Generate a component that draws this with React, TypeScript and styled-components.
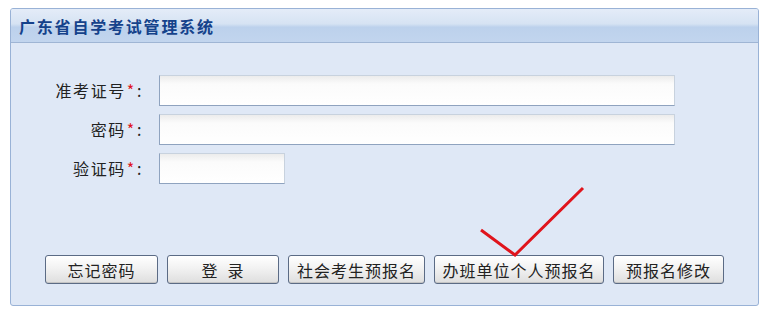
import React from "react";
import styled, { createGlobalStyle } from "styled-components";

const GlobalStyle = createGlobalStyle`
  html, body {
    margin: 0;
    padding: 0;
    background: #ffffff;
  }
  body {
    font-family: "Noto Sans CJK SC", "Liberation Sans", sans-serif;
  }
`;

const Page = styled.div`
  padding: 8px 0 0 10px;
`;

const Panel = styled.div`
  position: relative;
  width: 747px;
  height: 296px;
  border: 1px solid #99b2d6;
  border-radius: 3px;
  background: #dfe8f6;
  display: flex;
  flex-direction: column;
  overflow: hidden;
`;

const Header = styled.div`
  height: 33px;
  border-bottom: 1px solid #9fb5d4;
  background: linear-gradient(#e4ecf8 0%, #d6e3f3 45%, #bcd1ec 55%, #c2d5ee 100%);
  display: flex;
  align-items: center;
  padding-left: 8px;
`;

const Title = styled.h1`
  margin: 0;
  font-size: 16px;
  font-weight: bold;
  letter-spacing: 1.8px;
  color: #15428b;
`;

const Body = styled.div`
  flex: 1;
  display: flex;
  flex-direction: column;
  padding-top: 32px;
`;

const Fields = styled.div`
  display: grid;
  grid-template-columns: 132px 1fr;
  column-gap: 16px;
  row-gap: 8px;
  align-items: center;
`;

const Label = styled.label`
  text-align: right;
  font-size: 16px;
  letter-spacing: 1.6px;
  color: #222;
  line-height: 31px;
`;

const Star = styled.span`
  color: #e0141c;
  margin: 0 1px;
`;

const Field = styled.input<{ $w: number }>`
  box-sizing: border-box;
  width: ${(p) => p.$w}px;
  height: 31px;
  border: 1px solid #c8d2de;
  border-left-color: #8fa3bf;
  border-bottom-color: #8fa3bf;
  background: linear-gradient(#ececec 0px, #fbfbfb 8px, #ffffff 100%);
  outline: none;
  font-size: 14px;
`;

const Actions = styled.div`
  margin-top: 71px;
  padding-left: 34px;
  display: flex;
  gap: 9px;
`;

const Btn = styled.button<{ $w: number }>`
  box-sizing: border-box;
  width: ${(p) => p.$w}px;
  height: 29px;
  border: 1px solid #5b6b85;
  border-radius: 3px;
  background: linear-gradient(#ffffff 0%, #f2f2f2 45%, #dedede 100%);
  box-shadow: inset 0 -1px 0 #c4c4c4;
  font-family: "Noto Sans CJK SC", "Liberation Sans", sans-serif;
  font-size: 16px;
  letter-spacing: 1px;
  color: #222;
  padding: 0;
  white-space: pre;
  cursor: pointer;
`;

const Check = styled.svg`
  position: absolute;
  left: 466px;
  top: 175px;
  pointer-events: none;
`;

const buttons = [
  { text: "忘记密码", w: 113 },
  { text: "登  录", w: 112 },
  { text: "社会考生预报名", w: 137 },
  { text: "办班单位个人预报名", w: 170 },
  { text: "预报名修改", w: 111 },
];

export default function App() {
  return (
    <Page>
      <GlobalStyle />
      <Panel>
        <Header>
          <Title>广东省自学考试管理系统</Title>
        </Header>
        <Body>
          <Fields>
            <Label>
              准考证号<Star>*</Star>:
            </Label>
            <Field $w={516} />
            <Label>
              密码<Star>*</Star>:
            </Label>
            <Field $w={516} type="password" />
            <Label>
              验证码<Star>*</Star>:
            </Label>
            <Field $w={126} />
          </Fields>
          <Actions>
            {buttons.map((b) => (
              <Btn key={b.text} $w={b.w}>
                {b.text}
              </Btn>
            ))}
          </Actions>
        </Body>
        <Check width="112" height="76" viewBox="0 0 112 76">
          <polyline
            points="4,46 38,71 106,4"
            fill="none"
            stroke="#e0141c"
            strokeWidth="3"
          />
        </Check>
      </Panel>
    </Page>
  );
}
